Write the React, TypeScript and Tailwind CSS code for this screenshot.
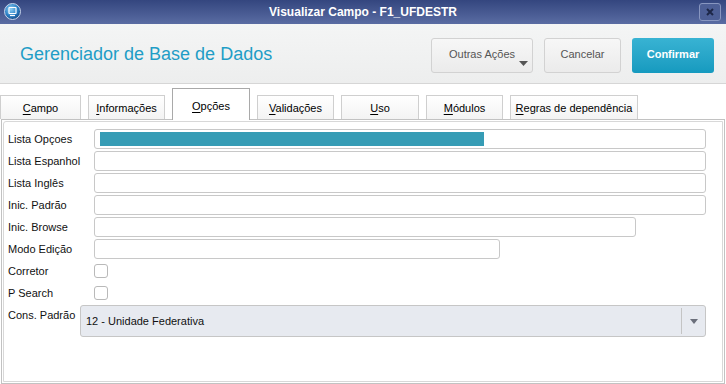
import React from "react";

const font = { fontFamily: '"Liberation Sans", Arial, sans-serif' };

const tabs = [
  { label: "Campo", key: "C", w: "w-[81px]" },
  { label: "Informações", key: "I", w: "w-[77px]" },
  { label: "Opções", key: "O", w: "w-[78px]", active: true },
  { label: "Validações", key: "V", w: "w-[77px]" },
  { label: "Uso", key: "U", w: "w-[78px]" },
  { label: "Módulos", key: "M", w: "w-[77px]" },
  { label: "Regras de dependência", key: "R", w: "w-[128px]" },
];

function Tab({ label, w, active }: { label: string; w: string; active?: boolean }) {
  const first = label.slice(0, 1);
  const rest = label.slice(1);
  if (active) {
    return (
      <div
        className={`${w} h-[32px] -mb-[1px] relative z-10 flex items-start justify-center pt-[9px] bg-white border border-b-0 border-[#a9a9a9] text-[11px] text-black`}
      >
        <span>
          <span className="underline underline-offset-2">{first}</span>
          {rest}
        </span>
      </div>
    );
  }
  return (
    <div
      className={`${w} h-[24px] flex items-center justify-center bg-gradient-to-b from-white to-[#f3f3f3] border border-b-0 border-[#cfcfcf] text-[11px] text-black pt-[2px]`}
    >
      <span>
        <span className="underline underline-offset-2">{first}</span>
        {rest}
      </span>
    </div>
  );
}

function Field({ label, w, children }: { label: string; w?: string; children?: React.ReactNode }) {
  return (
    <div className="flex items-center h-[20px]">
      <div className="w-[86px] shrink-0 text-[11px] text-[#111]">{label}</div>
      <div className={`${w ?? "w-[612px]"} h-[20px] border border-[#c8c8c8] rounded-[3px] bg-white flex items-center px-[5px]`}>
        {children}
      </div>
    </div>
  );
}

function Check({ label }: { label: string }) {
  return (
    <div className="flex items-center h-[20px]">
      <div className="w-[86px] shrink-0 text-[11px] text-[#111]">{label}</div>
      <div className="w-[14px] h-[14px] border border-[#b9b9b9] rounded-[3px] bg-white" />
    </div>
  );
}

export default function App() {
  return (
    <div className="w-[726px] h-[384px] overflow-hidden bg-white flex flex-col" style={font}>
      {/* title bar */}
      <div className="h-[24px] shrink-0 relative flex items-center justify-center bg-gradient-to-b from-[#34467f] to-[#5a6ca3]">
        <svg className="absolute left-[4px] top-[3px]" width="17" height="17" viewBox="0 0 17 17">
          <defs>
            <radialGradient id="ic" cx="40%" cy="35%" r="70%">
              <stop offset="0%" stopColor="#8fd0f5" />
              <stop offset="60%" stopColor="#2a7fc4" />
              <stop offset="100%" stopColor="#16457f" />
            </radialGradient>
          </defs>
          <circle cx="8.5" cy="8.5" r="8" fill="url(#ic)" stroke="#c9d4ea" strokeWidth="1" />
          <rect x="5" y="4.5" width="7" height="6" rx="0.5" fill="none" stroke="#fff" strokeWidth="1.2" />
          <path d="M6 12.5h5" stroke="#fff" strokeWidth="1.2" />
        </svg>
        <span className="text-white font-bold text-[12px]">Visualizar Campo - F1_UFDESTR</span>
        <div className="absolute right-[5px] top-[3px] w-[22px] h-[18px] rounded-[3px] border border-[#8896c0] bg-[#4d5f96] flex items-center justify-center">
          <svg width="8" height="8" viewBox="0 0 8 8">
            <path d="M1 1l6 6M7 1l-6 6" stroke="#1d2748" strokeWidth="2" />
          </svg>
        </div>
      </div>

      {/* header */}
      <div className="h-[60px] shrink-0 flex items-center justify-between pl-[20px] pr-[12px] bg-gradient-to-b from-[#f4f5f5] to-[#edeeee] border-b border-[#d6d6d6]">
        <span className="text-[18px] text-[#1f9dc6] mt-[1px]">Gerenciador de Base de Dados</span>
        <div className="flex items-center gap-[11px] mt-[3px]">
          <div className="relative w-[102px] h-[35px] rounded-[3px] border border-[#d2d2d2] bg-gradient-to-b from-[#f7f7f7] to-[#ebebeb] flex items-center justify-center text-[11px] text-[#555] pb-[2px]">
            Outras Ações
            <svg className="absolute right-[4px] bottom-[6px]" width="9" height="5" viewBox="0 0 9 5">
              <path d="M0 0h9L4.5 5z" fill="#555" />
            </svg>
          </div>
          <div className="w-[77px] h-[35px] rounded-[3px] border border-[#d2d2d2] bg-gradient-to-b from-[#f7f7f7] to-[#ebebeb] flex items-center justify-center text-[11px] text-[#555] pb-[2px]">
            Cancelar
          </div>
          <div className="w-[82px] h-[35px] rounded-[3px] bg-gradient-to-b from-[#38b3d3] to-[#159abf] flex items-center justify-center text-[11px] font-bold text-white pb-[2px]">
            Confirmar
          </div>
        </div>
      </div>

      {/* tabs */}
      <div className="h-[35px] shrink-0 flex items-end gap-[7px] pl-0 mt-[0px]">
        {tabs.map((t) => (
          <Tab key={t.label} label={t.label} w={t.w} active={t.active} />
        ))}
      </div>

      {/* panel */}
      <div className="flex-1 ml-[1px] mr-[1px] border border-[#c2c2c2] p-[1px]">
        <div className="h-full border border-[#d8d8d8] rounded-tl-[3px] pl-[4px] pt-[7px] flex flex-col gap-[2px]">
          <Field label="Lista Opçoes">
            <div className="w-[384px] h-[14px] bg-[#369cb5]" />
          </Field>
          <Field label="Lista Espanhol" />
          <Field label="Lista Inglês" />
          <Field label="Inic. Padrão" />
          <Field label="Inic. Browse" w="w-[542px]" />
          <Field label="Modo Edição" w="w-[406px]" />
          <Check label="Corretor" />
          <Check label="P Search" />
          <div className="flex items-start">
            <div className="w-[72px] shrink-0 text-[11px] text-[#111] pt-[2px]">Cons. Padrão</div>
            <div className="w-[626px] h-[32px] border border-[#c6c6c6] rounded-[3px] bg-[#e7eaf0] flex items-center">
              <span className="flex-1 pl-[5px] text-[11px] text-[#111]">12 - Unidade Federativa</span>
              <div className="w-px h-[26px] bg-[#c4c4c4]" />
              <div className="w-[23px] flex items-center justify-center">
                <svg width="8" height="5" viewBox="0 0 8 5">
                  <path d="M0 0h8L4 5z" fill="#6b6f7b" />
                </svg>
              </div>
            </div>
          </div>
        </div>
      </div>
    </div>
  );
}
